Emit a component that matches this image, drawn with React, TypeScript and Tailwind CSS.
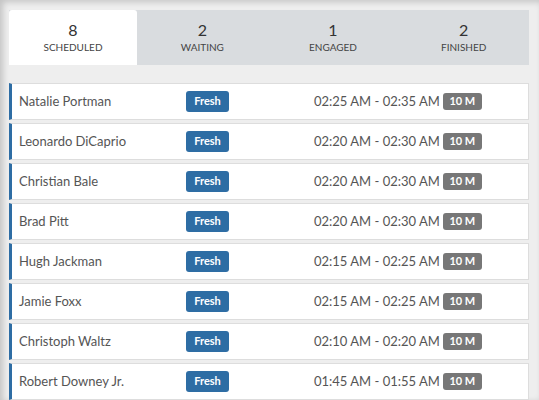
const TABS = [
  { count: 8, label: 'Scheduled', active: true },
  { count: 2, label: 'Waiting' },
  { count: 1, label: 'Engaged' },
  { count: 2, label: 'Finished' },
];

const ROWS = [
  { name: 'Natalie Portman', time: '02:25 AM - 02:35 AM' },
  { name: 'Leonardo DiCaprio', time: '02:20 AM - 02:30 AM' },
  { name: 'Christian Bale', time: '02:20 AM - 02:30 AM' },
  { name: 'Brad Pitt', time: '02:20 AM - 02:30 AM' },
  { name: 'Hugh Jackman', time: '02:15 AM - 02:25 AM' },
  { name: 'Jamie Foxx', time: '02:15 AM - 02:25 AM' },
  { name: 'Christoph Waltz', time: '02:10 AM - 02:20 AM' },
  { name: 'Robert Downey Jr.', time: '01:45 AM - 01:55 AM' },
];

export default function App() {
  return (
    <div className="h-[400px] overflow-hidden bg-[#eeeeee] shadow-[inset_3px_2px_6px_rgba(0,0,0,0.18)] pt-[10px] pl-[9px] pr-[10px] font-['Lato','Liberation_Sans',sans-serif]">
      {/* Tabs */}
      <div className="flex h-[55px] bg-[#d9dcdf]">
        {TABS.map((tab) => (
          <div
            key={tab.label}
            className={
              tab.active
                ? 'w-[128px] flex flex-col items-center pt-[10px] bg-white rounded-tl-[3px] rounded-tr-[3px]'
                : 'flex-1 flex flex-col items-center pt-[10px]'
            }
          >
            <span className="text-[16px] leading-[20px] text-[#333]">{tab.count}</span>
            <span className="text-[10px] leading-[14px] mt-[0px] uppercase text-[#444]">{tab.label}</span>
          </div>
        ))}
      </div>

      {/* Rows */}
      <div className="flex flex-col gap-[3px] mt-[18px]">
        {ROWS.map((row) => (
          <div
            key={row.name}
            className="flex items-center h-[37px] shrink-0 bg-white border border-[#dddddd] border-l-[3px] border-l-[#2e6da4] pl-[7px]"
          >
            <span className="w-[167px] text-[13px] text-[#555]">{row.name}</span>
            <span className="h-[21px] w-[43px] flex items-center justify-center rounded-[3px] bg-[#2e6da4] text-white text-[11px] font-bold">
              Fresh
            </span>
            <span className="ml-[85px] text-[13px] text-[#555]">{row.time}</span>
            <span className="ml-[3px] h-[17px] w-[39px] flex items-center justify-center rounded-[3px] bg-[#777] text-white text-[11px] font-bold">
              10 M
            </span>
          </div>
        ))}
      </div>
    </div>
  );
}
